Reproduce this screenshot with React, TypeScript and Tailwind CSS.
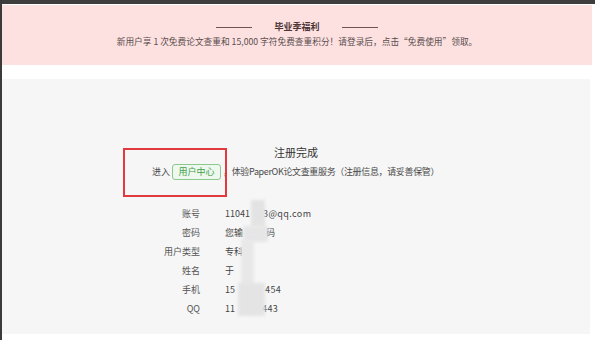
import React from "react";

const font = { fontFamily: '"Noto Sans CJK SC", "Noto Sans", sans-serif' };

type Row = { label: string; head: string; tail: string; headW: string };

const rows: Row[] = [
  { label: "账号", head: "11041", tail: "3@qq.com", headW: "w-[38px]" },
  { label: "密码", head: "您输", tail: "码", headW: "w-[41px]" },
  { label: "用户类型", head: "专科", tail: "", headW: "w-auto" },
  { label: "姓名", head: "于", tail: "", headW: "w-auto" },
  { label: "手机", head: "15", tail: "454", headW: "w-[40px]" },
  { label: "QQ", head: "11", tail: "443", headW: "w-[37px]" },
];

export default function App() {
  return (
    <div
      className="relative w-[595px] h-[340px] overflow-hidden bg-white border-l-2 border-[#3b3b3b]"
      style={font}
    >
      <div className="h-[4px] bg-[#3d3d3d]" />

      {/* 毕业季福利 */}
      <div className="mr-[3px] mt-[1px] h-[60px] bg-[#fde1e1] flex flex-col items-center pt-[15px]">
        <div className="flex items-center gap-[22px]">
          <span className="w-[36px] h-px bg-[#6d5555]" />
          <span className="text-[9px] leading-[14px] font-bold text-[#4d3535]">毕业季福利</span>
          <span className="w-[36px] h-px bg-[#6d5555]" />
        </div>
        <p className="mt-[2px] text-[8.7px] leading-[12px] text-[#5a4d4d]">
          新用户享 1 次免费论文查重和 15,000 字符免费查重积分！请登录后，点击“免费使用”领取。
        </p>
      </div>

      <div className="h-[14px]" />

      <div className="mr-[5px] h-[255px] bg-[#f6f6f6] pt-[65px]">
        <h2 className="text-center text-[11px] leading-[16px] text-[#333]">注册完成</h2>
        <div className="mt-[4px] pl-[150px] flex items-center gap-[2px] text-[9px] leading-[16px] text-[#4a4a4a]">
          <span>进入</span>
          <span className="h-[16px] w-[49px] justify-center rounded-[3px] border border-[#8cc98c] bg-[#eef8ee] text-[#43a04b] flex items-center">
            用户中心
          </span>
          <span className="tracking-[-0.35px]">，体验PaperOK论文查重服务（注册信息，请妥善保管）</span>
        </div>

        <div className="mt-[24px] ml-[140px] flex flex-col">
          {rows.map((r) => (
            <div key={r.label} className="h-[19px] flex items-center text-[9px]">
              <span className="w-[58px] text-right text-[#555]">{r.label}</span>
              <span className="ml-[25px] flex text-[#444]">
                <span className={r.headW}>{r.head}</span>
                {r.tail && <span className="tracking-[0.4px]">{r.tail}</span>}
              </span>
            </div>
          ))}
        </div>
      </div>

      {/* mosaic over the private values */}
      <div className="absolute left-[249px] top-[200px] w-[14px] h-[27px] bg-[#e3e3e3] blur-[1.5px]" />
      <div className="absolute left-[241px] top-[226px] w-[25px] h-[16px] bg-[#e6e6e6] blur-[1.5px]" />
      <div className="absolute left-[239px] top-[240px] w-[13px] h-[46px] bg-[#e8e8e8] blur-[1.5px]" />
      <div className="absolute left-[236px] top-[283px] w-[27px] h-[33px] bg-[#e4e4e4] blur-[1.5px]" />

      {/* annotation box */}
      <div className="absolute left-[121px] top-[148px] w-[104px] h-[49px] border-2 border-[#e0393e]" />
    </div>
  );
}
